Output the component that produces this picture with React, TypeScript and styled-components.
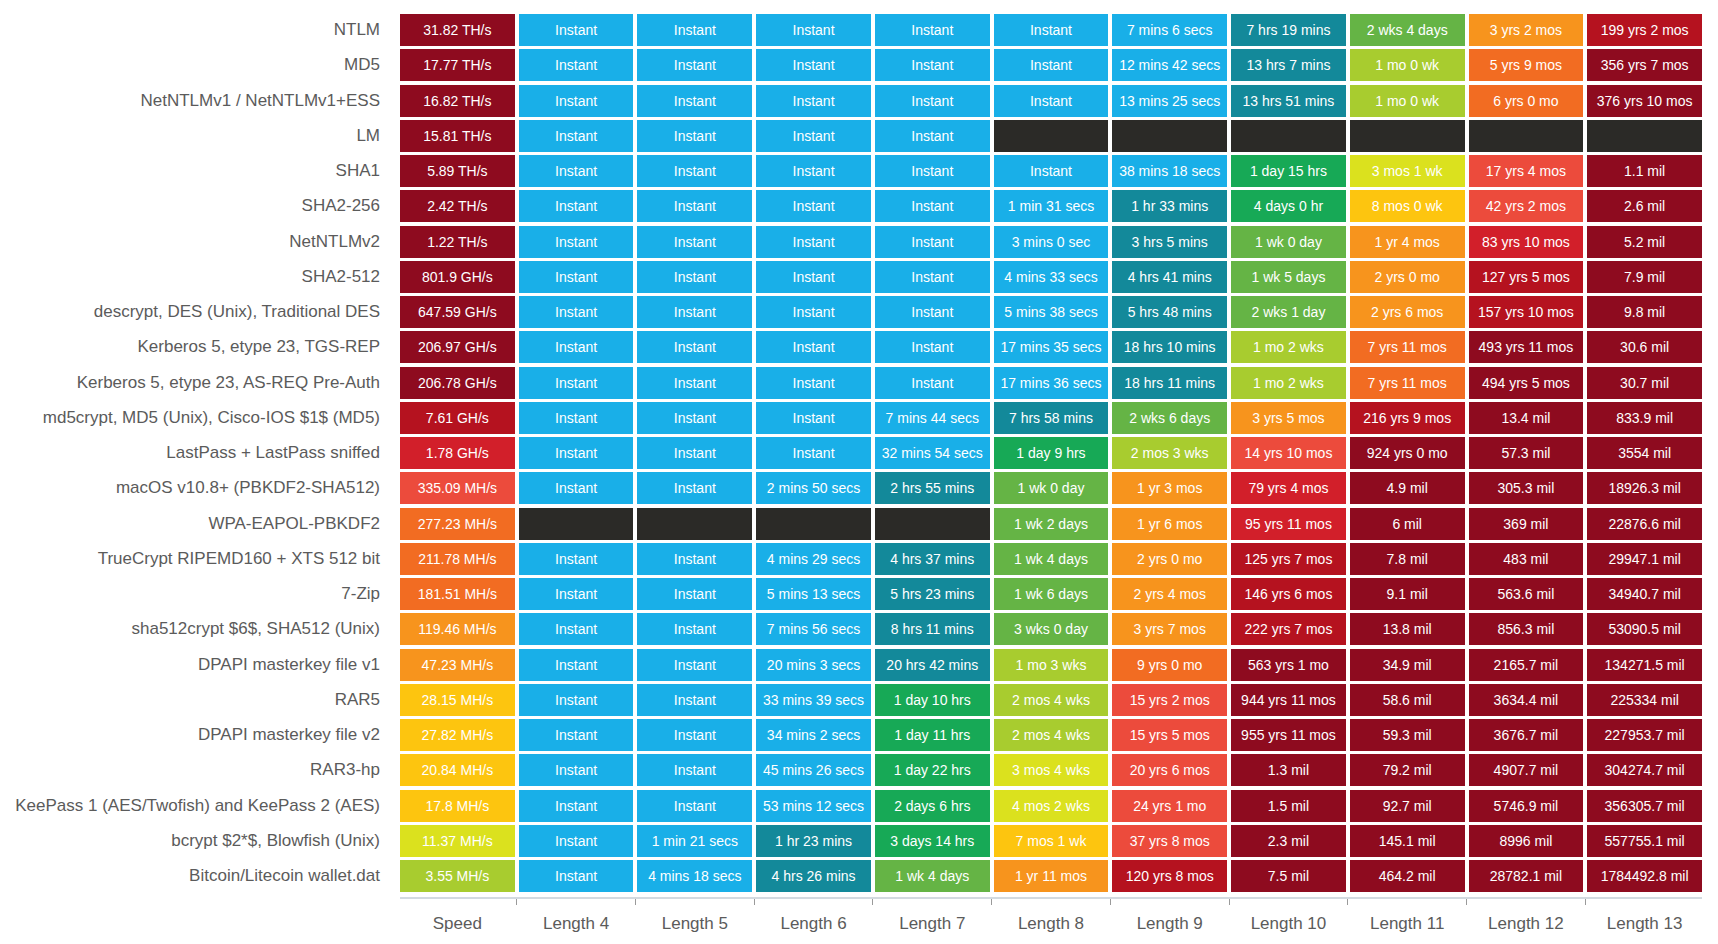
import styled, { createGlobalStyle } from "styled-components";

type Tone = "c" | "t" | "g" | "lg" | "yg" | "y" | "gd" | "o" | "do" | "ro" | "r" | "cr" | "dr" | "k";
type Cell = [string, Tone];
type Row = [string, Cell[]];

const palette: Record<Tone, string> = {
    c: "#19afe8",
    t: "#13899a",
    g: "#17a956",
    lg: "#65b445",
    yg: "#a8cc2f",
    y: "#dbe11e",
    gd: "#fdc50f",
    o: "#f7941d",
    do: "#f26c22",
    ro: "#ec4b3c",
    r: "#d21f2a",
    cr: "#b5121f",
    dr: "#8e0b1f",
    k: "#2b2a27",
};

const I: Cell = ["Instant", "c"];
const X: Cell = ["", "k"];

const columns = ["Speed", "Length 4", "Length 5", "Length 6", "Length 7", "Length 8", "Length 9", "Length 10", "Length 11", "Length 12", "Length 13"];

const rows: Row[] = [
    ["NTLM", [["31.82 TH/s", "dr"], I, I, I, I, I, ["7 mins 6 secs", "c"], ["7 hrs 19 mins", "t"], ["2 wks 4 days", "lg"], ["3 yrs 2 mos", "o"], ["199 yrs 2 mos", "cr"]]],
    ["MD5", [["17.77 TH/s", "dr"], I, I, I, I, I, ["12 mins 42 secs", "c"], ["13 hrs 7 mins", "t"], ["1 mo 0 wk", "yg"], ["5 yrs 9 mos", "do"], ["356 yrs 7 mos", "dr"]]],
    ["NetNTLMv1 / NetNTLMv1+ESS", [["16.82 TH/s", "dr"], I, I, I, I, I, ["13 mins 25 secs", "c"], ["13 hrs 51 mins", "t"], ["1 mo 0 wk", "yg"], ["6 yrs 0 mo", "do"], ["376 yrs 10 mos", "dr"]]],
    ["LM", [["15.81 TH/s", "dr"], I, I, I, I, X, X, X, X, X, X]],
    ["SHA1", [["5.89 TH/s", "dr"], I, I, I, I, I, ["38 mins 18 secs", "c"], ["1 day 15 hrs", "g"], ["3 mos 1 wk", "y"], ["17 yrs 4 mos", "ro"], ["1.1 mil", "dr"]]],
    ["SHA2-256", [["2.42 TH/s", "dr"], I, I, I, I, ["1 min 31 secs", "c"], ["1 hr 33 mins", "t"], ["4 days 0 hr", "g"], ["8 mos 0 wk", "gd"], ["42 yrs 2 mos", "ro"], ["2.6 mil", "dr"]]],
    ["NetNTLMv2", [["1.22 TH/s", "dr"], I, I, I, I, ["3 mins 0 sec", "c"], ["3 hrs 5 mins", "t"], ["1 wk 0 day", "lg"], ["1 yr 4 mos", "o"], ["83 yrs 10 mos", "r"], ["5.2 mil", "dr"]]],
    ["SHA2-512", [["801.9 GH/s", "dr"], I, I, I, I, ["4 mins 33 secs", "c"], ["4 hrs 41 mins", "t"], ["1 wk 5 days", "lg"], ["2 yrs 0 mo", "o"], ["127 yrs 5 mos", "cr"], ["7.9 mil", "dr"]]],
    ["descrypt, DES (Unix), Traditional DES", [["647.59 GH/s", "dr"], I, I, I, I, ["5 mins 38 secs", "c"], ["5 hrs 48 mins", "t"], ["2 wks 1 day", "lg"], ["2 yrs 6 mos", "o"], ["157 yrs 10 mos", "cr"], ["9.8 mil", "dr"]]],
    ["Kerberos 5, etype 23, TGS-REP", [["206.97 GH/s", "dr"], I, I, I, I, ["17 mins 35 secs", "c"], ["18 hrs 10 mins", "t"], ["1 mo 2 wks", "yg"], ["7 yrs 11 mos", "do"], ["493 yrs 11 mos", "dr"], ["30.6 mil", "dr"]]],
    ["Kerberos 5, etype 23, AS-REQ Pre-Auth", [["206.78 GH/s", "dr"], I, I, I, I, ["17 mins 36 secs", "c"], ["18 hrs 11 mins", "t"], ["1 mo 2 wks", "yg"], ["7 yrs 11 mos", "do"], ["494 yrs 5 mos", "dr"], ["30.7 mil", "dr"]]],
    ["md5crypt, MD5 (Unix), Cisco-IOS $1$ (MD5)", [["7.61 GH/s", "cr"], I, I, I, ["7 mins 44 secs", "c"], ["7 hrs 58 mins", "t"], ["2 wks 6 days", "lg"], ["3 yrs 5 mos", "o"], ["216 yrs 9 mos", "cr"], ["13.4 mil", "dr"], ["833.9 mil", "dr"]]],
    ["LastPass + LastPass sniffed", [["1.78 GH/s", "r"], I, I, I, ["32 mins 54 secs", "c"], ["1 day 9 hrs", "g"], ["2 mos 3 wks", "yg"], ["14 yrs 10 mos", "ro"], ["924 yrs 0 mo", "dr"], ["57.3 mil", "dr"], ["3554 mil", "dr"]]],
    ["macOS v10.8+ (PBKDF2-SHA512)", [["335.09 MH/s", "ro"], I, I, ["2 mins 50 secs", "c"], ["2 hrs 55 mins", "t"], ["1 wk 0 day", "lg"], ["1 yr 3 mos", "o"], ["79 yrs 4 mos", "r"], ["4.9 mil", "dr"], ["305.3 mil", "dr"], ["18926.3 mil", "dr"]]],
    ["WPA-EAPOL-PBKDF2", [["277.23 MH/s", "do"], X, X, X, X, ["1 wk 2 days", "lg"], ["1 yr 6 mos", "o"], ["95 yrs 11 mos", "r"], ["6 mil", "dr"], ["369 mil", "dr"], ["22876.6 mil", "dr"]]],
    ["TrueCrypt RIPEMD160 + XTS 512 bit", [["211.78 MH/s", "do"], I, I, ["4 mins 29 secs", "c"], ["4 hrs 37 mins", "t"], ["1 wk 4 days", "lg"], ["2 yrs 0 mo", "o"], ["125 yrs 7 mos", "cr"], ["7.8 mil", "dr"], ["483 mil", "dr"], ["29947.1 mil", "dr"]]],
    ["7-Zip", [["181.51 MH/s", "do"], I, I, ["5 mins 13 secs", "c"], ["5 hrs 23 mins", "t"], ["1 wk 6 days", "lg"], ["2 yrs 4 mos", "o"], ["146 yrs 6 mos", "cr"], ["9.1 mil", "dr"], ["563.6 mil", "dr"], ["34940.7 mil", "dr"]]],
    ["sha512crypt $6$, SHA512 (Unix)", [["119.46 MH/s", "o"], I, I, ["7 mins 56 secs", "c"], ["8 hrs 11 mins", "t"], ["3 wks 0 day", "lg"], ["3 yrs 7 mos", "o"], ["222 yrs 7 mos", "cr"], ["13.8 mil", "dr"], ["856.3 mil", "dr"], ["53090.5 mil", "dr"]]],
    ["DPAPI masterkey file v1", [["47.23 MH/s", "o"], I, I, ["20 mins 3 secs", "c"], ["20 hrs 42 mins", "t"], ["1 mo 3 wks", "yg"], ["9 yrs 0 mo", "do"], ["563 yrs 1 mo", "dr"], ["34.9 mil", "dr"], ["2165.7 mil", "dr"], ["134271.5 mil", "dr"]]],
    ["RAR5", [["28.15 MH/s", "gd"], I, I, ["33 mins 39 secs", "c"], ["1 day 10 hrs", "g"], ["2 mos 4 wks", "yg"], ["15 yrs 2 mos", "ro"], ["944 yrs 11 mos", "dr"], ["58.6 mil", "dr"], ["3634.4 mil", "dr"], ["225334 mil", "dr"]]],
    ["DPAPI masterkey file v2", [["27.82 MH/s", "gd"], I, I, ["34 mins 2 secs", "c"], ["1 day 11 hrs", "g"], ["2 mos 4 wks", "yg"], ["15 yrs 5 mos", "ro"], ["955 yrs 11 mos", "dr"], ["59.3 mil", "dr"], ["3676.7 mil", "dr"], ["227953.7 mil", "dr"]]],
    ["RAR3-hp", [["20.84 MH/s", "gd"], I, I, ["45 mins 26 secs", "c"], ["1 day 22 hrs", "g"], ["3 mos 4 wks", "y"], ["20 yrs 6 mos", "ro"], ["1.3 mil", "dr"], ["79.2 mil", "dr"], ["4907.7 mil", "dr"], ["304274.7 mil", "dr"]]],
    ["KeePass 1 (AES/Twofish) and KeePass 2 (AES)", [["17.8 MH/s", "gd"], I, I, ["53 mins 12 secs", "c"], ["2 days 6 hrs", "g"], ["4 mos 2 wks", "y"], ["24 yrs 1 mo", "ro"], ["1.5 mil", "dr"], ["92.7 mil", "dr"], ["5746.9 mil", "dr"], ["356305.7 mil", "dr"]]],
    ["bcrypt $2*$, Blowfish (Unix)", [["11.37 MH/s", "y"], I, ["1 min 21 secs", "c"], ["1 hr 23 mins", "t"], ["3 days 14 hrs", "g"], ["7 mos 1 wk", "gd"], ["37 yrs 8 mos", "ro"], ["2.3 mil", "dr"], ["145.1 mil", "dr"], ["8996 mil", "dr"], ["557755.1 mil", "dr"]]],
    ["Bitcoin/Litecoin wallet.dat", [["3.55 MH/s", "yg"], I, ["4 mins 18 secs", "c"], ["4 hrs 26 mins", "t"], ["1 wk 4 days", "lg"], ["1 yr 11 mos", "o"], ["120 yrs 8 mos", "cr"], ["7.5 mil", "dr"], ["464.2 mil", "dr"], ["28782.1 mil", "dr"], ["1784492.8 mil", "dr"]]],
];

export default function App() {
    return (
        <>
            <GlobalStyle/>
            <Chart>
                {rows.map(([label, cells]) => (
                    <StyledRow key={label}>
                        <RowLabel>{label}</RowLabel>
                        {cells.map(([text, tone], i) => (
                            <StyledCell key={i} $bg={palette[tone]}>{text}</StyledCell>
                        ))}
                    </StyledRow>
                ))}
                <AxisRow>
                    <span/>
                    <AxisScale>
                        {columns.map((name, i) => (
                            <AxisLabel key={name} $tick={i > 0}>{name}</AxisLabel>
                        ))}
                    </AxisScale>
                </AxisRow>
            </Chart>
        </>
    )
}

const GlobalStyle = createGlobalStyle`
  body {
    margin: 0;
    background: #fff;
    font-family: "Liberation Sans", Arial, sans-serif;
  }
`

const Chart = styled.div`
  width: 1702px;
  padding-top: 14px;
  display: flex;
  flex-direction: column;
  gap: 3.25px;
`

const StyledRow = styled.div`
  display: grid;
  grid-template-columns: 396px repeat(11, minmax(0, 1fr));
  column-gap: 4px;
  height: 32px;
`

const RowLabel = styled.div`
  display: flex;
  align-items: center;
  justify-content: flex-end;
  padding-right: 16px;
  font-size: 17px;
  color: #5b5b5b;
  white-space: nowrap;
`

const StyledCell = styled.div<{ $bg: string }>`
  display: flex;
  align-items: center;
  justify-content: center;
  background: ${p => p.$bg};
  color: #fff;
  font-size: 14px;
  white-space: nowrap;
`

const AxisRow = styled.div`
  display: grid;
  grid-template-columns: 396px 1fr;
  column-gap: 4px;
  margin-top: 1.5px;
`

const AxisScale = styled.div`
  display: grid;
  grid-template-columns: repeat(11, minmax(0, 1fr));
  column-gap: 4px;
  border-top: 2px solid #d3dae0;
`

const AxisLabel = styled.div<{ $tick: boolean }>`
  position: relative;
  padding-top: 15px;
  text-align: center;
  font-size: 17px;
  color: #5b5b5b;

  &::before {
    content: "";
    display: ${p => (p.$tick ? "block" : "none")};
    position: absolute;
    top: 0;
    left: -2.5px;
    width: 1px;
    height: 6px;
    background: #9a9a9a;
  }
`
